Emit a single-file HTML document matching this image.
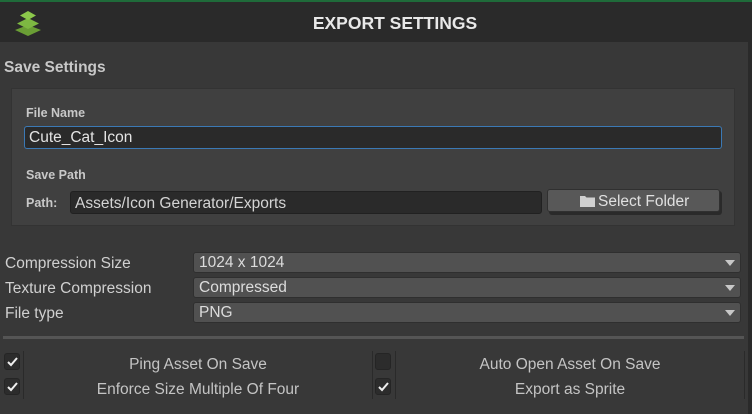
<!DOCTYPE html>
<html><head><style>
*{margin:0;padding:0;box-sizing:border-box}
body{width:752px;height:414px;background:#383838;font-family:"Liberation Sans",sans-serif;color:#d2d2d2;position:relative;overflow:hidden;font-size:15.5px}
.a{position:absolute}
.hdr{left:0;top:0;width:752px;height:42px;background:#2a2a2a;border-top:2px solid #1f6b3a}
.t{white-space:nowrap}
.inp{background:#2a2a2a;border:1px solid #212121;border-radius:3px}
.dd{left:193px;width:548px;height:21px;background:#515151;border:1px solid #2f2f2f;border-radius:3px}
.dd span{position:absolute;left:5px;top:1px;color:#dcdcdc;font-size:15.5px}
.dd i{position:absolute;right:5px;top:7px;width:0;height:0;border-left:5px solid transparent;border-right:5px solid transparent;border-top:6px solid #c8c8c8}
.cb{width:16px;height:17px;background:#2c2c2c;border:1px solid #252525;border-radius:3px}
.cb svg{position:absolute;left:2px;top:3px}
.lab{font-size:15.5px;color:#c4c4c4;text-align:center}
.dv{width:1px;background:#2a2a2a}
</style></head><body>
<div class="a hdr"></div>
<svg class="a" style="left:13px;top:9px" width="30" height="28" viewBox="0 0 30 28">
<path d="M15 16 L28 21 L15 27 L2 21Z" fill="#6a9e35"/>
<path d="M15 9 L26 14.5 L15 20 L4 14.5Z" fill="#7db842"/>
<path d="M15 2 L23 6.5 L15 11 L7 6.5Z" fill="#8cc84b"/>
</svg>
<div class="a t" style="left:0;width:790px;top:13px;text-align:center;font-weight:bold;font-size:17.5px;color:#e8e8e8">EXPORT SETTINGS</div>
<div class="a t" style="left:4px;top:59px;font-weight:bold;font-size:15.5px;color:#c8c8c8">Save Settings</div>
<div class="a" style="left:11px;top:88px;width:724px;height:138px;background:#404040;border:1px solid #333"></div>
<div class="a t" style="left:26px;top:106px;font-weight:bold;font-size:12.5px;color:#c8c8c8">File Name</div>
<div class="a inp" style="left:24px;top:126px;width:698px;height:23px;border-color:#3b79b5"></div>
<div class="a t" style="left:29px;top:129px;color:#e4e4e4">Cute_Cat_Icon</div>
<div class="a t" style="left:26px;top:168px;font-weight:bold;font-size:12.5px;color:#c8c8c8">Save Path</div>
<div class="a t" style="left:26px;top:196px;font-weight:bold;font-size:12.5px;color:#c8c8c8">Path:</div>
<div class="a inp" style="left:70px;top:191px;width:472px;height:23px"></div>
<div class="a t" style="left:75px;top:195px;color:#d4d4d4">Assets/Icon Generator/Exports</div>
<div class="a" style="left:549px;top:191px;width:173px;height:24px;background:#2a2a2a;border-radius:3px"></div>
<div class="a" style="left:547px;top:189px;width:173px;height:23px;background:#585858;border:1px solid #303030;border-radius:3px"></div>
<svg class="a" style="left:580px;top:195px" width="15" height="12" viewBox="0 0 15 12"><path d="M0 1h5l1.5 1.5H15V12H0Z" fill="#d0d0d0"/></svg>
<div class="a t" style="left:598px;top:193px;color:#e0e0e0;font-size:15.5px">Select Folder</div>
<div class="a t" style="left:5px;top:255px;color:#d0d0d0">Compression Size</div>
<div class="a t" style="left:5px;top:280px;color:#d0d0d0">Texture Compression</div>
<div class="a t" style="left:5px;top:305px;color:#d0d0d0">File type</div>
<div class="a dd" style="top:252px"><span>1024 x 1024</span><i></i></div>
<div class="a dd" style="top:277px"><span>Compressed</span><i></i></div>
<div class="a dd" style="top:302px"><span>PNG</span><i></i></div>
<div class="a" style="left:3px;top:336px;width:741px;height:3px;background:#555"></div>
<div class="a cb" style="left:4px;top:353px"><svg width="11" height="10" viewBox="0 0 11 10"><path d="M1 5l3 3 6-7" stroke="#eee" stroke-width="2" fill="none"/></svg></div>
<div class="a cb" style="left:4px;top:378px"><svg width="11" height="10" viewBox="0 0 11 10"><path d="M1 5l3 3 6-7" stroke="#eee" stroke-width="2" fill="none"/></svg></div>
<div class="a cb" style="left:375px;top:353px"></div>
<div class="a cb" style="left:375px;top:378px"><svg width="11" height="10" viewBox="0 0 11 10"><path d="M1 5l3 3 6-7" stroke="#eee" stroke-width="2" fill="none"/></svg></div>
<div class="a dv" style="left:23px;top:351px;height:48px"></div>
<div class="a dv" style="left:372px;top:351px;height:48px"></div>
<div class="a dv" style="left:395px;top:351px;height:48px"></div>
<div class="a dv" style="left:744px;top:351px;height:48px"></div>
<div class="a lab t" style="left:24px;width:348px;top:356px">Ping Asset On Save</div>
<div class="a lab t" style="left:24px;width:348px;top:381px">Enforce Size Multiple Of Four</div>
<div class="a lab t" style="left:396px;width:348px;top:356px">Auto Open Asset On Save</div>
<div class="a lab t" style="left:396px;width:348px;top:381px">Export as Sprite</div>
<div class="a" style="left:748px;top:42px;width:4px;height:372px;background:#2a2a2a"></div>
</body></html>
